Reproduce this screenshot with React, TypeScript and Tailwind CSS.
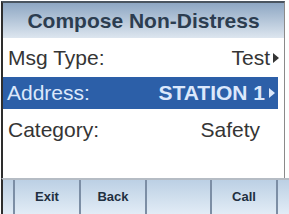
import React from "react";

function Arrow({ className }: { className: string }) {
  return (
    <svg width="6" height="10" viewBox="0 0 6 10" className={className}>
      <path d="M0 0 L6 5 L0 10 Z" fill="currentColor" />
    </svg>
  );
}

export default function App() {
  const font = { fontFamily: '"Liberation Sans", Arial, sans-serif' };

  return (
    <div
      className="flex h-[214px] w-[289px] flex-col overflow-hidden bg-white"
      style={font}
    >
      <div className="ml-[1px] mt-[1px] flex w-[284px] flex-1 flex-col border-l-2 border-r border-t-2 border-l-[#2e2e2e] border-r-[#8a8a8a] border-t-[#4a5560]">
        <div className="flex h-[35px] items-center justify-center bg-gradient-to-b from-[#8ea7c3] to-[#dde6ef]">
          <span className="text-[21px] font-bold text-[#2c3d50]">
            Compose Non-Distress
          </span>
        </div>

        <div className="flex h-[39px] items-center justify-between pl-[5px] pr-[5px] text-[21px] text-[#353535]">
          <span>Msg Type:</span>
          <span className="flex items-center gap-[3px]">
            Test
            <Arrow className="text-[#353535]" />
          </span>
        </div>

        <div className="mr-[6px] flex h-[32px] items-center justify-between bg-[#2c5fa8] pl-[4px] pr-[3px] text-[21px] text-[#dce8fb]">
          <span>Address:</span>
          <span className="flex items-center gap-[4px] font-bold">
            STATION 1
            <Arrow className="text-[#dce8fb]" />
          </span>
        </div>

        <div className="flex h-[42px] items-center justify-between pl-[5px] pr-[24px] text-[21px] text-[#353535]">
          <span>Category:</span>
          <span>Safety</span>
        </div>
      </div>

      <div className="ml-[1px] flex h-[36px] border-l-2 border-t-2 border-l-[#2e2e2e] border-t-[#b5bcc4] bg-gradient-to-b from-[#bcd0e4] to-[#e2ecf6] text-[13px] font-bold text-[#1f2f40]">
        <div className="w-[12px] border-r-2 border-[#7c8ea5]" />
        <div className="flex w-[66px] items-center justify-center border-r-2 border-[#7c8ea5]">
          Exit
        </div>
        <div className="flex w-[66px] items-center justify-center border-r-2 border-[#7c8ea5]">
          Back
        </div>
        <div className="flex w-[65px] items-center justify-center border-r-2 border-[#7c8ea5]" />
        <div className="flex w-[66px] items-center justify-center border-r-2 border-[#7c8ea5]">
          Call
        </div>
        <div className="flex-1" />
      </div>
    </div>
  );
}
